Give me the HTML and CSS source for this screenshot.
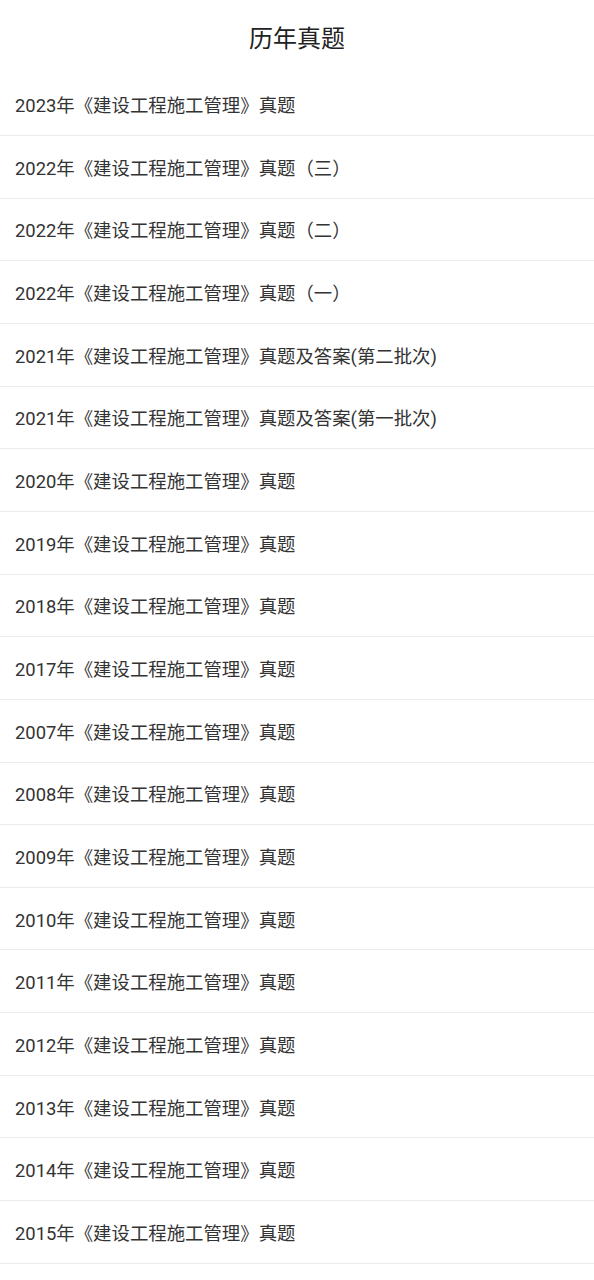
FILE: index.html
```html
<!DOCTYPE html>
<html lang="zh-CN">
<head>
    <meta charset="UTF-8">
    <meta name="viewport" content="width=device-width, initial-scale=1.0">
    <title>历年真题</title>
    <link rel="stylesheet" href="styles.css">
</head>
<body>
    <header class="top-bar">
        <h1>历年真题</h1>
    </header>

    <ul class="paper-list">
        <li>2023年《建设工程施工管理》真题</li>
        <li>2022年《建设工程施工管理》真题（三）</li>
        <li>2022年《建设工程施工管理》真题（二）</li>
        <li>2022年《建设工程施工管理》真题（一）</li>
        <li>2021年《建设工程施工管理》真题及答案(第二批次)</li>
        <li>2021年《建设工程施工管理》真题及答案(第一批次)</li>
        <li>2020年《建设工程施工管理》真题</li>
        <li>2019年《建设工程施工管理》真题</li>
        <li>2018年《建设工程施工管理》真题</li>
        <li>2017年《建设工程施工管理》真题</li>
        <li>2007年《建设工程施工管理》真题</li>
        <li>2008年《建设工程施工管理》真题</li>
        <li>2009年《建设工程施工管理》真题</li>
        <li>2010年《建设工程施工管理》真题</li>
        <li>2011年《建设工程施工管理》真题</li>
        <li>2012年《建设工程施工管理》真题</li>
        <li>2013年《建设工程施工管理》真题</li>
        <li>2014年《建设工程施工管理》真题</li>
        <li>2015年《建设工程施工管理》真题</li>
    </ul>
</body>
</html>
```

FILE: styles.css
```css
body {
    margin: 0;
    background-color: #ffffff;
    font-family: Roboto, "Noto Sans CJK SC", sans-serif;
    color: #333333;
}
.top-bar {
    height: 73.3px;
    display: flex;
    align-items: center;
    justify-content: center;
}
.top-bar h1 {
    margin: 0;
    font-size: 24px;
    font-weight: 400;
    color: #222222;
}
.paper-list {
    list-style: none;
    margin: 0;
    padding: 0;
}
.paper-list li {
    box-sizing: border-box;
    height: 62.67px;
    padding: 0 15px;
    display: flex;
    align-items: center;
    font-size: 18.4px;
    border-bottom: 1px solid #ebebeb; /* 区切り線 */
}
```
